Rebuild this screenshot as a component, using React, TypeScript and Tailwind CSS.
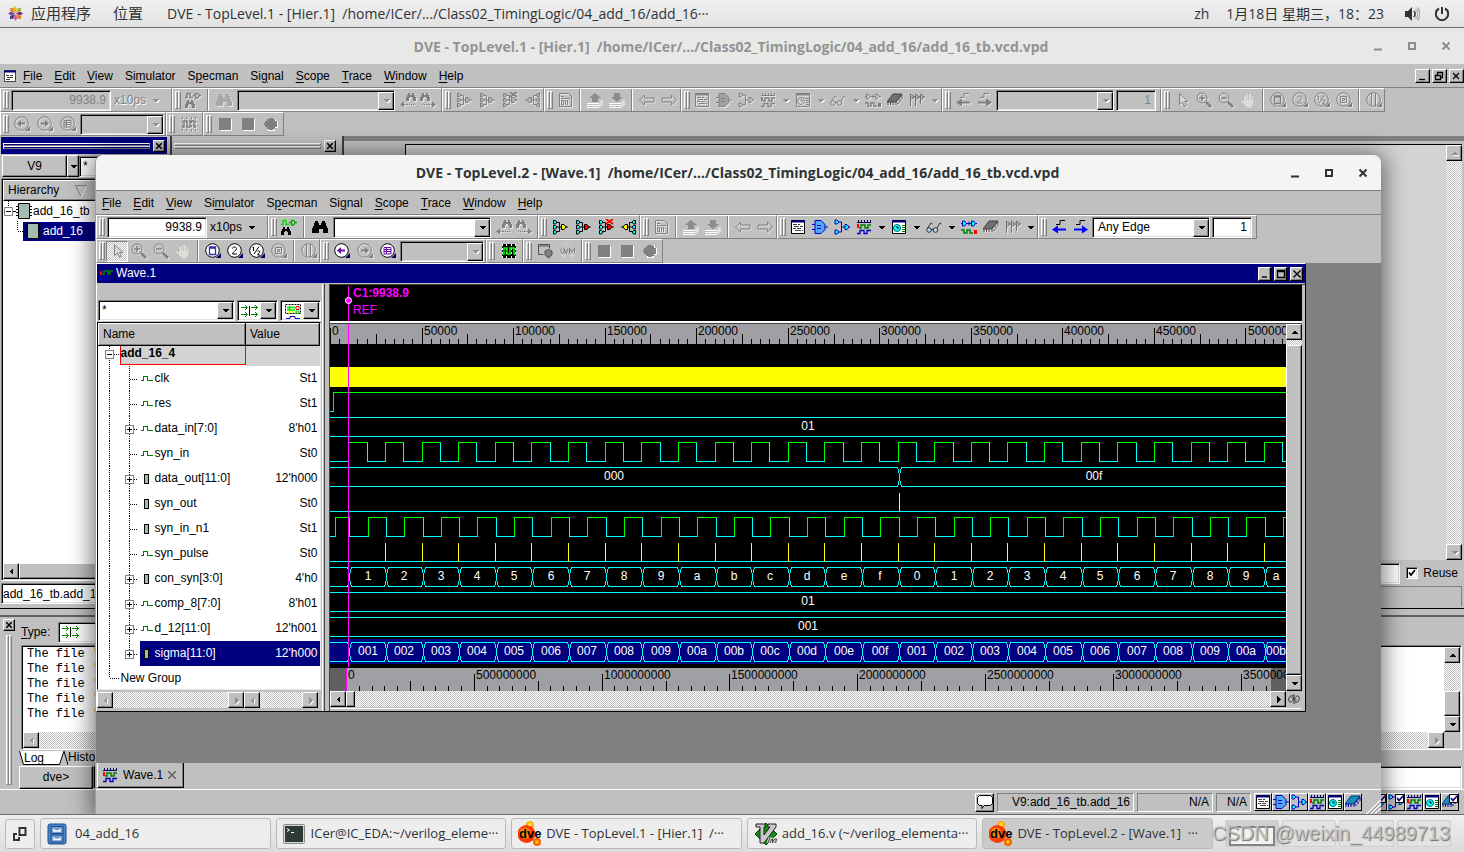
import React from "react";

const raised =
  "border border-t-white border-l-white border-r-black border-b-black bg-[#c0c0c0] shadow-[inset_-1px_-1px_0_#808080]";
const well =
  "border border-t-[#808080] border-l-[#808080] border-r-white border-b-white p-[1px] shadow-[inset_1px_1px_0_#000000,inset_-1px_-1px_0_#dfdfdf]";
const statusBox =
  "flex h-[19px] items-center justify-end border border-t-[#808080] border-l-[#808080] border-r-white border-b-white pr-[3px]";
const dither = "bg-[repeating-conic-gradient(#c0c0c0_0_25%,#ffffff_0_50%)] bg-[length:2px_2px]";
const uiFont = "font-['Liberation_Sans',Arial,sans-serif]";
const titleFont = "font-['Open_Sans','Noto_Sans','Noto_Sans_CJK_SC',sans-serif]";

/* ---------- icons ---------- */

type IconName =
  | "signalFind" | "binoculars" | "findPrev" | "findNext" | "fanIn" | "fanInRed" | "fanInX" | "fanOut"
  | "doc" | "up" | "down" | "back" | "forward" | "source" | "gate" | "schematic" | "wave" | "list"
  | "glasses" | "gateWave" | "chip" | "flags" | "edgePrev" | "edgeNext" | "cursor" | "zoomIn" | "zoomOut"
  | "hand" | "fit" | "two" | "half" | "zoomBox" | "cursors" | "circleBack" | "circleFwd" | "circleList"
  | "waveGreen" | "dbShield" | "uvm" | "square" | "dot" | "bus" | "group";

const lens = (ink: string, fill: string, dark: string, body: React.ReactNode) => (
  <g>
    <circle cx="7.5" cy="7.5" r="6.8" fill={fill} stroke={ink} />
    <path d="M11 15h5v-5z" fill={dark} />
    {body}
  </g>
);

function Icon({ name, off = false, checked = false }: { name: IconName; off?: boolean; checked?: boolean }) {
  const c = (color: string) => (off ? "#808080" : color);
  const k = c("#000000");
  const blue = c("#0000c0");
  const lensFill = off ? "none" : "#ffffff";
  const purple = c("#6a0dad");
  let w = 16;
  let body: React.ReactNode = null;
  const bino = (x: number, y: number, color: string) => (
    <path
      transform={`translate(${x} ${y})`}
      fill={color}
      d="M2 0h2v2h2V0h2v2h1v2h1v4H7V5H6V4H4v1H3v3H0V4h1V2h1z"
    />
  );
  const smallTree = (tip: string, flip: boolean) => (
    <g transform={flip ? "translate(16 0) scale(-1 1)" : undefined}>
      <path d="M4 3.500h3.500v9H4M4 8h6M14 8h2" fill="none" stroke={k} />
      <path
        d="M1.500 1.500h2l1.500 1.500-1.500 2h-2zM1.500 6.500h2l1.500 1.500-1.500 2h-2zM1.500 11.500h2l1.500 1.500-1.500 2h-2z"
        fill={off ? "#b0b0b0" : "#00ffff"}
        stroke={k}
      />
      <path d="M9.500 5.500h2.500l2 2.500-2 2.500h-2.500z" fill={off ? "#b0b0b0" : tip} stroke={k} />
    </g>
  );
  switch (name) {
    case "signalFind":
      body = (
        <g>
          <path d="M0 5.500h2V1.500h3v4h3" fill="none" stroke={c("#00e000")} strokeWidth="1.500" />
          <path d="M8 3.500h2M10.500 1.500h2l2 2-2 2.500h-2zM14 3.500h2" fill="none" stroke={c("#00b000")} strokeWidth="1.300" />
          {bino(0, 8, k)}
        </g>
      );
      break;
    case "binoculars":
      body = <path fill={off ? "#a8a8a8" : k} d="M3 2h3v2h1v2h2V4h1V2h3v2h1v3h1v2h1v5h-5v-4H7v4H0V9h1V7h1V4h1z" />;
      break;
    case "findPrev":
      body = <g>{bino(6, 1, "#808080")}<path d="M1 12.500h4M9 12.500h1m1 0h1m1 0h1M6 12.500h2" stroke="#808080" /><path d="M0 12.500l4-3v6z" fill="#808080" /></g>;
      break;
    case "findNext":
      body = <g>{bino(0, 1, "#808080")}<path d="M11 12.500h4M2 12.500h1m1 0h1m1 0h1M8 12.500h2" stroke="#808080" /><path d="M16 12.500l-4-3v6z" fill="#808080" /></g>;
      break;
    case "fanIn":
      body = smallTree("#ffff00", false);
      break;
    case "fanInRed":
      body = smallTree("#ff0000", false);
      break;
    case "fanInX":
      body = <g>{smallTree("#ff0000", false)}<path d="M8 0l7 5M15 0L8 5" stroke={c("#ff0000")} strokeWidth="1.800" /></g>;
      break;
    case "fanOut":
      body = smallTree("#ffff00", true);
      break;
    case "doc":
      body = (
        <g fill="none" stroke="#808080">
          <path d="M2.500 1.500h9l3 3v10h-12zM4 4.500h3M4 6.500h9" />
          <path d="M4.500 8.500h2v4h-2zM8.500 8v5M10.500 8v5" />
        </g>
      );
      break;
    case "up":
    case "down":
      body = (
        <g>
          <path d="M0 11.500h12l4-4M0 13.500h12l4-4M0 15.500h12l4-4" stroke="#ffffff" fill="none" />
          <path fill="#8c8c8c" d={name === "up" ? "M8 1l6 5h-3v4H5V6H2z" : "M8 10l6-5h-3V1H5v4H2z"} />
        </g>
      );
      break;
    case "back":
      body = <path d="M.5 8l5-5v3H15v4H5.500v3z" fill="none" stroke="#808080" />;
      break;
    case "forward":
      body = <path d="M15.500 8l-5-5v3H1v4h9.500v3z" fill="none" stroke="#808080" />;
      break;
    case "source":
      body = (
        <g>
          <path d="M1.500 1.500h13v13h-13z" fill={off ? "none" : "#ffffff"} stroke={k} />
          <path d="M1 2.500h14" stroke={c("#000080")} strokeWidth="2" />
          <path d="M3 5.500h4m1 0h2M4 7.500h5m1 0h3M3 9.500h3m1 0h4M5 11.500h6m1 0h1" stroke={c("#404040")} />
        </g>
      );
      break;
    case "gate":
      body = (
        <g>
          <path d="M0 5.500h3M0 10.500h3M13 8h3" stroke={blue} />
          <path d="M3 1.500h6l4 4v5l-4 4H3z" fill={off ? "#a0a0a0" : "#50a8ff"} stroke={blue} />
          <path d="M5 6.500h4M5 9.500h4" stroke={blue} />
        </g>
      );
      break;
    case "schematic":
      body = (
        <g>
          <path d="M4 3h3.500v10H4M7.500 8H11M15 8h1" stroke={blue} fill="none" />
          <path d="M1 1h2l2 2-2 2H1zM1 11h2l2 2-2 2H1zM11 5.500h2l2 2.500-2 2.500h-2z" fill={off ? "#c0c0c0" : "#00ffff"} stroke={blue} />
        </g>
      );
      break;
    case "wave":
      body = (
        <g fill="none">
          <path d="M1 3.500h14M2.500 1v2M5.500 1v2M8.500 1v2M11.500 1v2M14.500 1v2" stroke={c("#000060")} />
          <path d="M1 5h2v4H1z" fill={c("#ff0000")} />
          <path d="M3 9h2V6h4v3h3V6h3" stroke={c("#008000")} strokeWidth="1.500" />
          <path d="M1 14.500h3v-3h4v3h3v-3h4" stroke={blue} strokeWidth="1.300" />
        </g>
      );
      break;
    case "list":
      body = (
        <g>
          <path d="M1.500 1.500h13v13h-13z" fill={off ? "none" : "#ffffff"} stroke={k} />
          <path d="M1 2.500h14" stroke={c("#000080")} strokeWidth="2" />
          <circle cx="6" cy="9" r="3.500" fill={off ? "#d8d8d8" : "#00ffff"} stroke={c("#007070")} />
          <path d="M6 7v2h2" stroke={k} fill="none" />
          <path d="M11 6.500h3M11 8.500h3M11 10.500h3M11 12.500h3" stroke={c("#008000")} />
        </g>
      );
      break;
    case "glasses":
      body = (
        <g fill="none" stroke={c("#303030")}>
          <circle cx="3" cy="11" r="2.300" fill={off ? "none" : "#b0d8f8"} />
          <circle cx="9.500" cy="11" r="2.300" fill={off ? "none" : "#b0d8f8"} />
          <path d="M5 10.500h2M1.500 9l3.500-5 1.500 1M11 9l3-5 1.500 1" />
        </g>
      );
      break;
    case "gateWave":
      body = (
        <g fill="none">
          <path d="M0 4.500h16M8 2.500v4" stroke={blue} />
          <path d="M1.500 2h2l2 2.500-2 2.500h-2zM10.500 2h2l2 2.500-2 2.500h-2z" fill={off ? "#c0c0c0" : "#00ffff"} stroke={blue} />
          <path d="M0 11h3v3h3v-3h3v3h3" stroke={c("#008000")} strokeWidth="1.500" />
          <path d="M13 11h3v4h-3z" fill={c("#ff0000")} />
        </g>
      );
      break;
    case "chip":
      body = (
        <g>
          <path d="M6 2h9l-6 8H0z" fill={off ? "#707070" : "#1890b8"} stroke={off ? "#404040" : "#003080"} />
          <path d="M1 10v3M3.500 10v3M6 10v3M9 13v-3l6-7v4M11 10v2M13 7v3" stroke={off ? "#505050" : "#0000a0"} fill="none" />
        </g>
      );
      break;
    case "flags":
      body = <path d="M1.500 14V2l4 3-4 3M6.500 14V2l4 3-4 3M11.500 12V2l4 3-4 3M1 5h15" fill="none" stroke="#707070" />;
      break;
    case "edgePrev":
      body = <g><path d="M5 5.500h4v-4h5" fill="none" stroke={k} /><path d="M1 10.500l6-4v3h8v2H7v3z" fill={c("#0000ff")} /></g>;
      break;
    case "edgeNext":
      body = <g><path d="M3 5.500h4v-4h5" fill="none" stroke={k} /><path d="M15 10.500l-6-4v3H1v2h8v3z" fill={c("#0000ff")} /></g>;
      break;
    case "cursor":
      body = <path d="M5.500 1.500v11l3-2.500 2 4.500 2-1-2-4h3.500z" fill="#d8d8d8" stroke="#808080" />;
      break;
    case "zoomIn":
    case "zoomOut":
      body = (
        <g fill="none" stroke="#808080">
          <circle cx="6" cy="6" r="5" />
          <path d="M10 10l5 5" strokeWidth="2.500" />
          <path d={name === "zoomIn" ? "M3 6h6M6 3v6" : "M3 6h6"} strokeWidth="1.500" />
        </g>
      );
      break;
    case "hand":
      body = (
        <g>
          <path d="M5 9V4M7.500 8V2M10 8V2.500M12.500 9V4.500M2 9l3 3" stroke="#aaa8a2" strokeWidth="3" strokeLinecap="round" />
          <path d="M5 9V4M7.500 8V2M10 8V2.500M12.500 9V4.500M2 9l3 3" stroke="#dedcd7" strokeWidth="2" strokeLinecap="round" />
          <path d="M4 8h9.500v3l-2 4.500H7L4 12z" fill="#dedcd7" />
        </g>
      );
      break;
    case "fit":
      body = lens(k, lensFill, c("#00006a"), <path d="M4.500 4h6v7.500h-6zM4.500 5h6" fill="none" stroke={c("#3030b0")} strokeWidth="1.300" />);
      break;
    case "two":
      body = lens(k, lensFill, c("#00006a"), <path d="M5.500 5.500c0-2 4-2 4 0S5.500 9 5.500 11H10" fill="none" stroke={k} />);
      break;
    case "half":
      body = lens(k, lensFill, c("#00006a"), <path d="M3.500 4.500l1-.5v4M5 11l5-7.500M8.500 8.500c1-1.500 3-.5 2 1L8.500 12H11" fill="none" stroke={k} />);
      break;
    case "zoomBox":
      body = lens("#808080", "none", "#808080", <path d="M4.500 4.500h6v6h-6zM6.500 6.500h2v2h-2z" fill="none" stroke="#808080" />);
      break;
    case "cursors":
      body = lens("#808080", "none", "#808080", <path d="M5.500 1v13M9.500 1v13" stroke="#808080" />);
      break;
    case "circleBack":
      body = lens(k, lensFill, c("#00006a"), <path d="M3 7.500l4-3.500v2.500h4v2H7V11z" fill={purple} />);
      break;
    case "circleFwd":
      body = lens("#808080", "none", "#808080", <path d="M12 7.500L8 4v2.500H4v2h4V11z" fill="#808080" />);
      break;
    case "circleList":
      body = lens(k, lensFill, c("#00006a"), <path d="M4 4.500h7v6.500H4zM4 6.500h7M4 8.500h7M6.500 4v7" fill="none" stroke={purple} />);
      break;
    case "waveGreen":
      body = (
        <g fill="none">
          {!off && <path d="M1 1h14v14H1z" fill="#000000" />}
          <path d="M1.500 1v14M5.500 1v14M10.500 1v14M14.500 1v14" stroke={off ? "#808080" : "#ffffff"} strokeDasharray="2 2" />
          <path d="M1 11h2V5h3v6h3V5h4v6h2" stroke={c("#00ff00")} strokeWidth="1.500" />
        </g>
      );
      break;
    case "dbShield":
      body = <g fill="none" stroke="#505050"><path d="M1.500 1.500h11v4M1.500 1.500v10h5M1 3h12" /><path d="M8 8l3.500-1.500L15 8v4l-3.500 3L8 12z" fill="#808080" /></g>;
      break;
    case "uvm":
      body = (
        <g>
          <circle cx="8" cy="8" r="6.500" fill="none" stroke="#ffffff" strokeWidth="2" strokeDasharray="8 5" />
          <circle cx="8" cy="8" r="6.500" fill="none" stroke="#909090" strokeDasharray="8 5" />
          <path d="M1 5.500v4l1.500 1 1.500-1v-4l2 5 2-5M9.500 10.500v-5L12 9l2.500-3.500v5" fill="none" stroke="#808080" />
        </g>
      );
      break;
    case "square":
      body = <g><path d="M3 3h12v12H3z" fill="#ffffff" /><path d="M2 2h12v12H2z" fill="#808080" /></g>;
      break;
    case "dot":
      body = <g><path d="M5 3h8v2h2v7h-3v3H5z" fill="#ffffff" /><path d="M6 2h4v1h2v2h2v6h-2v2h-2v1H6v-1H4v-2H2V9H1V7h1V5h2V3h2z" fill="#808080" /></g>;
      break;
    case "bus":
      w = 18;
      body = (
        <g stroke="#008000" fill="none">
          <path d="M0 4.500h6M4 2l2.500 2.500L4 7M0 11.500h6M4 9l2.500 2.500L4 14M10 4.500h7M14 2l2.500 2.500L14 7M10 11.500h7M14 9l2.500 2.500L14 14" />
          <path d="M8.500 3v10" stroke="#000000" />
        </g>
      );
      break;
    case "group":
      w = 18;
      body = (
        <g fill="none">
          <path d="M1.500 1.500h15v9h-15z" stroke="#000000" strokeDasharray="2 1" />
          <path d="M3 4.500h8M5.500 3v4M3 7h8" stroke="#00e000" strokeWidth="1.500" />
          <path d="M12 3.500h3v3h-3z" stroke="#ff0000" />
          <path d="M3 9h7" stroke="#ffff00" strokeWidth="1.500" />
          <path d="M12 8h3v2h-3z" stroke="#00e000" />
          <path d="M2 15.500h4v-2h5v2h5" stroke="#0000c0" />
        </g>
      );
      break;
  }
  const emboss = off && !["hand", "square", "dot"].includes(name);
  return (
    <svg
      width={w}
      height="16"
      viewBox={`0 0 ${w} 16`}
      aria-hidden="true"
      className={emboss ? "shrink-0 [filter:drop-shadow(1px_1px_0_#e4e4e4)]" : "shrink-0"}
    >
      {body}
      {checked && (
        <g fill="none">
          <path d="M7.500.5h8v8h-8z" fill="#ffffff" stroke="#000000" />
          <path d="M9 4l2 2.500L15 2" stroke="#000080" strokeWidth="1.500" />
        </g>
      )}
    </svg>
  );
}

function Caret({ off = false, dir = "down" }: { off?: boolean; dir?: "down" | "up" | "left" | "right" }) {
  const d = { down: "M1 3h7L4.500 6.500z", up: "M1 6h7L4.500 2.500z", left: "M6 1v7L2.500 4.500z", right: "M3 1v7l3.500-3.500z" }[dir];
  return (
    <svg width="9" height="9" viewBox="0 0 9 9" shapeRendering="crispEdges" aria-hidden="true" className="shrink-0">
      {off && <path d={d} fill="#ffffff" transform="translate(1 1)" />}
      <path d={d} fill={off ? "#909090" : "#000000"} />
    </svg>
  );
}

/* ---------- toolbar parts ---------- */

function Tool({ name, off = false, label, w = "w-[22px]", pressed = false }: {
  name: IconName; off?: boolean; label: string; w?: string; pressed?: boolean;
}) {
  return (
    <button
      type="button"
      aria-label={label}
      className={`flex h-[21px] shrink-0 items-center justify-center ${w} ${pressed ? `${dither} border border-t-[#808080] border-l-[#808080] border-r-white border-b-white` : ""}`}
    >
      <Icon name={name} off={off} />
    </button>
  );
}

function Drop({ off = false, label }: { off?: boolean; label: string }) {
  return (
    <button type="button" aria-label={label} className="flex h-[21px] w-[13px] shrink-0 items-center justify-center">
      <Caret off={off} />
    </button>
  );
}

const Sep = () => <span className="mx-[3px] h-6 w-[2px] shrink-0 border-l border-l-[#808080] border-r border-r-white" />;

function Grip({ className = "" }: { className?: string }) {
  return <span className={`w-[3px] border border-t-white border-l-white border-r-[#808080] border-b-[#808080] ${className}`} />;
}

function Group({ w, children }: { w: string; children: React.ReactNode }) {
  return (
    <div className={`flex h-6 shrink-0 items-center overflow-hidden border border-t-white border-l-white border-r-[#808080] border-b-[#808080] ${w}`}>
      <span className="flex w-[9px] shrink-0 pl-[2px]">
        <Grip className="h-[18px]" />
        <Grip className="h-[18px]" />
      </span>
      {children}
    </div>
  );
}

function Select({ w, off = false, value = "", label }: { w: string; off?: boolean; value?: string; label: string }) {
  return (
    <span className={`relative flex h-[21px] shrink-0 items-center ${well} ${w} ${off ? "bg-[#c0c0c0]" : "bg-white"}`}>
      <select aria-label={label} className="h-full w-full appearance-none bg-transparent pl-1 text-[12px] text-black outline-none">
        <option>{value}</option>
      </select>
      <span className={`pointer-events-none absolute top-[1px] right-0 bottom-0 flex w-4 items-center justify-center ${raised}`}>
        <Caret off={off} />
      </span>
    </span>
  );
}

const inputBase = `shrink-0 text-right text-[12px] outline-none h-[21px] ${well}`;

function GroupA({ off = false }: { off?: boolean }) {
  return (
    <Group w="w-[172px]">
      <input aria-label="Time" defaultValue="9938.9" className={`${inputBase} ml-[1px] w-[100px] pr-1 ${off ? "bg-[#c0c0c0] text-[#808080]" : "bg-white text-black"}`} />
      <span className={`w-[38px] shrink-0 pl-[3px] ${off ? "text-[#808080] [text-shadow:1px_1px_0_white]" : ""}`}>x10ps</span>
      <Drop off={off} label="Time unit" />
    </Group>
  );
}

function GroupB({ off = false }: { off?: boolean }) {
  return (
    <Group w="w-[270px]">
      <Tool name="signalFind" off={off} label="Search signals" />
      <Sep />
      <Tool name="binoculars" off={off} label="Find" w="w-6" />
      <span className="w-[1px] shrink-0" />
      <Select w="w-[158px]" off={off} label="Find text" />
      <span className="w-1 shrink-0" />
      <Tool name="findPrev" off label="Find previous" w="w-[18px]" />
      <Tool name="findNext" off label="Find next" w="w-[22px]" />
    </Group>
  );
}

function GroupC({ off = false }: { off?: boolean }) {
  return (
    <Group w="w-[102px]">
      <Tool name="fanIn" off={off} label="Drivers" w="w-[23px]" />
      <Tool name="fanInRed" off={off} label="Active drivers" w="w-[23px]" />
      <Tool name="fanInX" off={off} label="Trace X" w="w-[23px]" />
      <Tool name="fanOut" off={off} label="Loads" w="w-[23px]" />
    </Group>
  );
}

function GroupD() {
  return (
    <Group w="w-[137px]">
      <Tool name="doc" off label="Edit source" />
      <Sep />
      <Tool name="up" label="Scope up" />
      <Tool name="down" label="Scope down" />
      <Sep />
      <Tool name="back" off label="Back" />
      <Tool name="forward" off label="Forward" />
    </Group>
  );
}

function GroupE({ off = false }: { off?: boolean }) {
  return (
    <Group w="w-[261px]">
      <Tool name="source" off={off} label="Source view" />
      <Tool name="gate" off={off} label="Schematic view" />
      <Tool name="schematic" off={off} label="Path schematic" />
      <Tool name="wave" off={off} label="Wave view" />
      <Drop off={off} label="Wave view options" />
      <Tool name="list" off={off} label="List view" />
      <Drop off={off} label="List view options" />
      <Tool name="glasses" off={off} label="Watch" />
      <Drop off={off} label="Watch options" />
      <Tool name="gateWave" off={off} label="Compare" />
      <Tool name="chip" off label="Memory" />
      <Tool name="flags" off label="Markers" />
      <Drop off={off} label="Marker options" />
    </Group>
  );
}

function GroupF({ off = false }: { off?: boolean }) {
  return (
    <Group w="w-[219px]">
      <Tool name="edgePrev" off={off} label="Previous edge" />
      <Tool name="edgeNext" off={off} label="Next edge" />
      <Select w="w-[118px]" off={off} value={off ? "" : "Any Edge"} label="Edge type" />
      <input aria-label="Edge count" defaultValue="1" className={`${inputBase} ml-[2px] w-[40px] pr-1 ${off ? "bg-[#c0c0c0] text-[#808080]" : "bg-white text-black"}`} />
    </Group>
  );
}

function GroupG({ off = false }: { off?: boolean }) {
  return (
    <Group w="w-[224px]">
      <Tool name="cursor" off label="Select" pressed={!off} />
      <Tool name="zoomIn" off label="Zoom in" />
      <Tool name="zoomOut" off label="Zoom out" />
      <Tool name="hand" off label="Pan" />
      <Sep />
      <Tool name="fit" off={off} label="Zoom full" />
      <Tool name="two" off={off} label="Zoom in 2x" />
      <Tool name="half" off={off} label="Zoom out 2x" />
      <Tool name="zoomBox" off label="Zoom area" />
      <Sep />
      <Tool name="cursors" off label="Zoom to cursors" />
    </Group>
  );
}

function GroupH({ off = false }: { off?: boolean }) {
  return (
    <Group w="w-[166px]">
      <Tool name="circleBack" off={off} label="Previous zoom" w="w-[23px]" />
      <Tool name="circleFwd" off label="Next zoom" w="w-[23px]" />
      <Tool name="circleList" off={off} label="Named zooms" w="w-[24px]" />
      <Select w="w-[84px]" off label="Zoom name" />
    </Group>
  );
}

const GroupI = ({ off = false }: { off?: boolean }) => (
  <Group w="w-[37px]">
    <Tool name="waveGreen" off={off} label="Signal groups" w="w-[26px]" />
  </Group>
);

const GroupJ = () => (
  <Group w="w-[59px]">
    <Tool name="dbShield" label="Database" w="w-[23px]" />
    <Tool name="uvm" label="UVM" w="w-[24px]" />
  </Group>
);

const GroupK = () => (
  <Group w="w-[81px]">
    <Tool name="square" label="Stop" w="w-[23px]" />
    <Tool name="square" label="Break" w="w-6" />
    <Tool name="dot" label="Record" w="w-[22px]" />
  </Group>
);

const menus: [string, number][] = [
  ["File", 0], ["Edit", 0], ["View", 0], ["Simulator", 2], ["Specman", 1], ["Signal", 2],
  ["Scope", 0], ["Trace", 0], ["Window", 0], ["Help", 0],
];

function MenuItems() {
  return (
    <>
      {menus.map(([m, i]) => (
        <button key={m} type="button">
          {m.slice(0, i)}
          <span className="underline underline-offset-2">{m[i]}</span>
          {m.slice(i + 1)}
        </button>
      ))}
    </>
  );
}

function TitleButtons({ color }: { color: string }) {
  return (
    <div className="flex items-center gap-[18px]">
      {["M4 11.500h8", "M5 5h6v6h-6z", "M4.500 4.500l7 7M11.500 4.500l-7 7"].map((d, i) => (
        <button key={d} type="button" aria-label={["Minimize", "Maximize", "Close"][i]}>
          <svg width="16" height="16" viewBox="0 0 16 16">
            <path d={d} stroke={color} strokeWidth="2" fill="none" />
          </svg>
        </button>
      ))}
    </div>
  );
}

function CloseX({ label }: { label: string }) {
  return (
    <button type="button" aria-label={label} className={`flex h-3 w-3 shrink-0 items-center justify-center ${raised}`}>
      <svg width="6" height="6" viewBox="0 0 6 6"><path d="M0 0l6 6M6 0L0 6" stroke="#000" strokeWidth="1.500" /></svg>
    </button>
  );
}

function ScrollBtn({ dir, off = false }: { dir: "up" | "down" | "left" | "right"; off?: boolean }) {
  return (
    <button type="button" aria-label={`Scroll ${dir}`} className={`flex h-4 w-4 shrink-0 items-center justify-center ${raised}`}>
      <Caret dir={dir} off={off} />
    </button>
  );
}

function DockTitle({ active = false, label }: { active?: boolean; label: string }) {
  const bar = "h-[3px] border border-t-white border-l-white border-r-[#808080] border-b-[#808080]";
  return (
    <div className={`flex h-[17px] shrink-0 items-center gap-[3px] pr-[2px] pl-[2px] ${active ? "bg-[#000080]" : "bg-[#c0c0c0]"}`}>
      <div className="flex flex-1 flex-col">
        <span className={bar} />
        <span className={bar} />
      </div>
      <CloseX label={label} />
    </div>
  );
}

/* ---------- back window ---------- */

const ChipGlyph = () => (
  <svg width="16" height="16" viewBox="0 0 16 16" aria-hidden="true" className="shrink-0">
    <path d="M0 3.500h16M0 6.500h16M0 9.500h16M0 12.500h16" stroke="#000000" />
    <path d="M2.500.5h11v15h-11z" fill="#a4bcb0" stroke="#000000" />
  </svg>
);

function StatusIcons({ checks = false }: { checks?: boolean }) {
  const names: IconName[] = ["source", "gate", "schematic", "wave", "list", "chip"];
  return (
    <div className="flex shrink-0">
      {names.map((n, i) => (
        <button key={n} type="button" aria-label={n} className="flex h-[18px] w-[18px] items-center justify-center border border-t-white border-l-white border-r-black border-b-black">
          <Icon name={n} checked={checks && [1, 2, 5].includes(i)} />
        </button>
      ))}
    </div>
  );
}

function LeftDock() {
  return (
    <div className="flex w-[172px] shrink-0 flex-col border-r-2 border-r-[#404040] pt-[1px] pr-[3px] pl-[1px]">
      <DockTitle active label="Close hierarchy" />
      <div className="flex h-[24px] shrink-0 items-center">
        <button type="button" className={`ml-[1px] h-[22px] w-[65px] ${raised}`}>V9</button>
        <button type="button" aria-label="Choose database" className={`flex h-[22px] w-3 items-center justify-center ${raised}`}><Caret /></button>
        <input aria-label="Filter" defaultValue="*" className={`h-[21px] w-[84px] bg-white pl-[3px] text-[12px] ${well}`} />
      </div>
      <div className={`flex min-h-0 flex-1 flex-col bg-white ${well}`}>
        <div className={`flex h-[21px] shrink-0 items-center gap-4 pl-[4px] ${raised}`}>
          Hierarchy
          <svg width="12" height="12" viewBox="0 0 12 12"><path d="M.5.5h11L6 11.500z" fill="none" stroke="#808080" /><path d="M11.500 1L6 12" stroke="#fff" /></svg>
        </div>
        <div className="flex h-[20px] shrink-0 items-center">
          <svg width="13" height="20" viewBox="0 0 13 20" className="shrink-0">
            <path d="M5.500 0v6" stroke="#000" strokeDasharray="1 1" />
            <path d="M1.500 6.500h8v8h-8z" fill="#fff" stroke="#808080" />
            <path d="M3 10.500h5M10 10.500h3" stroke="#000" />
          </svg>
          <ChipGlyph />
          <span className="ml-[1px]">add_16_tb</span>
        </div>
        <div className="flex h-[20px] shrink-0 items-center">
          <svg width="20" height="20" viewBox="0 0 20 20" className="shrink-0">
            <path d="M14.500 0v10M15 10.500h5" stroke="#000" strokeDasharray="1 1" />
          </svg>
          <span className="flex h-[19px] items-center bg-[#000080] pr-10 pl-[2px] text-white">
            <ChipGlyph />
            <span className="ml-[2px]">add_16</span>
          </span>
        </div>
        <div className="flex-1" />
        <div className="flex h-4 shrink-0"><ScrollBtn dir="left" /><div className={`flex-1 ${raised}`} /></div>
      </div>
      <input aria-label="Scope path" defaultValue="add_16_tb.add_16" className={`mt-[2px] mb-[2px] h-[21px] w-full shrink-0 bg-white text-[12px] ${well}`} />
    </div>
  );
}

function BackWindow() {
  const logLines = ["The file '", "The file '", "The file '", "The file '", "The file '"];
  return (
    <section className="flex h-full flex-col bg-[#c0c0c0]">
      <header className="flex h-9 shrink-0 items-center bg-[#e8e8e7] pr-[10px]">
        <h1 className={`flex-1 pl-[92px] text-center text-[14px] font-bold whitespace-pre text-[#919494] ${titleFont}`}>
          {"DVE - TopLevel.1 - [Hier.1]  /home/ICer/.../Class02_TimingLogic/04_add_16/add_16_tb.vcd.vpd"}
        </h1>
        <TitleButtons color="#8b8e8f" />
      </header>
      <nav className="flex h-6 shrink-0 items-center gap-3 border-b border-b-[#808080] pt-[1px] pl-1">
        <svg width="12" height="12" viewBox="0 0 12 12" className="-mr-[5px]">
          <path d="M.5.5h11v11H.5z" fill="#fff" stroke="#404040" /><path d="M0 1.500h12" stroke="#000080" strokeWidth="2" />
          <path d="M2 5.500h3m1 0h3M3 7.500h6M2 9.500h4" stroke="#404040" />
        </svg>
        <MenuItems />
        <div className="flex-1" />
        <div className="flex gap-[2px]">
          {["M3 9.500h6", "M4.500 5V2.500h5v5H7M2.500 5.500h5v4h-5z", "M3 3l6 6M9 3l-6 6"].map((d, i) => (
            <button key={d} type="button" aria-label={["Minimize view", "Restore view", "Close view"][i]} className={`h-[14px] w-[15px] ${raised}`}>
              <svg width="12" height="12" viewBox="0 0 12 12"><path d={d} fill="none" stroke="#000" strokeWidth="1.300" /></svg>
            </button>
          ))}
        </div>
      </nav>
      <div className="flex shrink-0 overflow-hidden">
        <GroupA off /><GroupB off /><GroupC off /><GroupD /><GroupE off /><GroupF off /><GroupG off />
      </div>
      <div className="flex shrink-0 overflow-hidden">
        <GroupH off /><GroupI off /><GroupK />
      </div>
      <div className="flex min-h-0 flex-1">
        <LeftDock />
        <div className="w-[172px] shrink-0 border-r-2 border-r-[#404040] pt-[1px] pr-1"><DockTitle label="Close dock" /></div>
        <div className="flex min-w-0 flex-1 flex-col border-t-[5px] border-t-[#808080] pt-[3px] pr-[2px]">
          <div className="ml-[61px] flex min-h-0 flex-1 border-t border-l border-black bg-[#d3d3d3]">
            <div className="flex-1" />
            <div className={`flex w-4 flex-col justify-between ${dither}`}><ScrollBtn dir="up" off /><ScrollBtn dir="down" off /></div>
          </div>
          <div className="flex h-[26px] shrink-0 items-center justify-end">
            <input aria-label="Source file" className={`h-[21px] flex-1 bg-white ${well}`} />
            <label className="flex items-center gap-[5px] pr-1 pl-[6px]">
              <span className="relative flex h-3 w-3 items-center justify-center">
                <input type="checkbox" defaultChecked className={`h-3 w-3 appearance-none bg-white ${well}`} />
                <svg width="8" height="8" viewBox="0 0 8 8" className="pointer-events-none absolute"><path d="M1 3.500l2 2.500 4-5" fill="none" stroke="#000" strokeWidth="1.800" /></svg>
              </span>
              Reuse
            </label>
          </div>
          <div className="h-5 shrink-0 border-t border-r border-t-[#808080] border-r-[#808080]" />
        </div>
      </div>
      <div className="mt-[2px] flex h-[181px] shrink-0 flex-col border-t border-t-black pt-[6px]">
        <div className="flex min-h-0 flex-1 border-t-2 border-t-[#606060] pt-[2px]">
          <div className="flex w-[19px] shrink-0 flex-col gap-1 pl-[3px]">
            <CloseX label="Close log" />
            <div className="flex flex-1 pb-1 pl-[3px]">
              <Grip />
              <Grip />
            </div>
          </div>
          <div className="flex min-w-0 flex-1 flex-col pr-[2px]">
            <div className="flex h-[26px] shrink-0 items-center pl-[2px]">
              <span className="w-[37px]"><span className="underline underline-offset-2">T</span>ype:</span>
              <span className={`flex h-[21px] w-14 items-center bg-white pl-[3px] ${well}`}><Icon name="bus" /></span>
            </div>
            <div className={`ml-[2px] flex min-h-0 flex-1 flex-col bg-white ${well}`}>
              <div className="flex min-h-0 flex-1">
                <div className="flex-1 pl-[4px] font-['Liberation_Mono','Courier_New',monospace] text-[12px] leading-[15px] whitespace-pre">
                  {logLines.map((l, i) => <p key={i}>{l}</p>)}
                </div>
                <div className={`flex w-4 flex-col ${dither}`}>
                  <ScrollBtn dir="up" /><div className="flex-1" /><div className={`h-[25px] ${raised}`} /><ScrollBtn dir="down" />
                </div>
              </div>
              <div className={`flex h-4 shrink-0 justify-between ${dither}`}>
                <ScrollBtn dir="left" off />
                <div className="flex"><ScrollBtn dir="right" off /><span className="w-4 bg-[#c0c0c0]" /></div>
              </div>
            </div>
            <div className="flex h-[16px] shrink-0 items-start pt-[1px]">
              <span className="relative flex h-[14px] w-[45px] shrink-0">
                <svg width="45" height="14" viewBox="0 0 45 14" className="absolute inset-0" aria-hidden="true">
                  <path d="M.5 0l4 13.500h36L45 0" fill="#ffffff" stroke="#000000" />
                </svg>
                <button type="button" className="relative pl-[5px] leading-[13px]">Log</button>
              </span>
              <button type="button" className="flex h-[14px] items-start leading-[13px]"><svg width="4" height="14" viewBox="0 0 4 14"><path d="M0 0l4 14" stroke="#000" /></svg>History</button>
            </div>
            <div className="flex h-[23px] shrink-0">
              <button type="button" className={`w-[74px] ${raised}`}>dve&gt;</button>
              <input aria-label="Command" className={`min-w-0 flex-1 bg-white ${well}`} />
            </div>
          </div>
        </div>
      </div>
      <div className="flex h-[25px] shrink-0 items-center justify-end border-t border-t-white pr-[5px]"><StatusIcons checks /></div>
    </section>
  );
}

/* ---------- signal list ---------- */

type Signal = { name: string; value: string; expand?: boolean; kind: "wire" | "reg"; selected?: boolean };
const signals: Signal[] = [
  { name: "clk", value: "St1", kind: "wire" },
  { name: "res", value: "St1", kind: "wire" },
  { name: "data_in[7:0]", value: "8'h01", kind: "wire", expand: true },
  { name: "syn_in", value: "St0", kind: "wire" },
  { name: "data_out[11:0]", value: "12'h000", kind: "reg", expand: true },
  { name: "syn_out", value: "St0", kind: "reg" },
  { name: "syn_in_n1", value: "St1", kind: "reg" },
  { name: "syn_pulse", value: "St0", kind: "wire" },
  { name: "con_syn[3:0]", value: "4'h0", kind: "reg", expand: true },
  { name: "comp_8[7:0]", value: "8'h01", kind: "wire", expand: true },
  { name: "d_12[11:0]", value: "12'h001", kind: "wire", expand: true },
  { name: "sigma[11:0]", value: "12'h000", kind: "reg", expand: true, selected: true },
];

function SignalTable() {
  return (
    <table className="w-full table-fixed border-collapse text-left">
      <thead>
        <tr className="h-[22px]">
          <th className={`w-[147px] pl-1 font-normal ${raised}`}>Name</th>
          <th className={`pl-1 font-normal ${raised}`}>Value</th>
        </tr>
      </thead>
      <tbody>
        <tr className="h-5">
          <td className="p-0">
            <div className="flex h-5">
              <svg width="21" height="20" viewBox="0 0 21 20" shapeRendering="crispEdges" className="shrink-0">
                <path d="M10.500 0v20M15 8.500h6" stroke="#000" strokeDasharray="1 1" />
                <path d="M6.500 4.500h8v8h-8z" fill="#fff" stroke="#808080" />
                <path d="M8 8.500h5" stroke="#000" />
              </svg>
              <span className="h-[19px] flex-1 border border-t-0 border-[#ff0000] bg-[#d3d3d3] leading-[14px] font-bold">add_16_4</span>
            </div>
          </td>
          <td className="bg-[#d3d3d3] p-0" />
        </tr>
        {signals.map((s) => (
          <tr key={s.name} className="h-[25px]">
            <td className="p-0">
              <div className="flex h-[25px]">
                <svg width="41" height="25" viewBox="0 0 41 25" shapeRendering="crispEdges" className="shrink-0">
                  <path d={s.selected ? "M10.500 0v25M30.500 0v13M31 13.500h8" : "M10.500 0v25M30.500 0v25M31 13.500h8"} stroke="#000" strokeDasharray="1 1" />
                  {s.expand && (
                    <g>
                      <path d="M26.500 9.500h8v8h-8z" fill="#fff" stroke="#808080" />
                      <path d="M28 13.500h5M30.500 11v5" stroke="#000" />
                    </g>
                  )}
                </svg>
                <span className={`flex flex-1 items-center ${s.selected ? "bg-[#000080] text-white" : ""}`}>
                  <svg width="15" height="13" viewBox="0 0 15 13" shapeRendering="crispEdges" className="shrink-0">
                    {s.kind === "wire" ? (
                      <path d="M1 8.500h2.500v-4h4v4H13" fill="none" stroke="#008000" />
                    ) : (
                      <path d="M4.500 2.500h4v9h-4z" fill="#a4bcb0" stroke="#000" />
                    )}
                  </svg>
                  {s.name}
                </span>
              </div>
            </td>
            <td className={`p-0 pr-[2px] text-right ${s.selected ? "bg-[#000080] text-white" : ""}`}>{s.value}</td>
          </tr>
        ))}
        <tr className="h-[25px]">
          <td className="p-0" colSpan={2}>
            <div className="flex h-[25px] items-center">
              <svg width="22" height="25" viewBox="0 0 22 25" shapeRendering="crispEdges" className="shrink-0">
                <path d="M10.500 0v12M11 12.500h9" fill="none" stroke="#000" strokeDasharray="1 1" />
              </svg>
              New Group
            </div>
          </td>
        </tr>
      </tbody>
    </table>
  );
}

/* ---------- wave drawing ---------- */

const STEP = 18.31;
const edge = (n: number) => Math.round(STEP * n) + 0.5;
const rowTop = (i: number) => 43.5 + 25 * i;
const WIDTH = 958;

function Clock({ row, offset, startHigh }: { row: number; offset: number; startHigh: boolean }) {
  const hi = rowTop(row);
  const lo = hi + 19;
  let green = "";
  let cyan = "";
  let high = startHigh;
  for (let n = 1; n <= 52; n++) {
    const x = edge(n) + offset;
    const next = Math.min(edge(n + 1) + offset, WIDTH);
    high = !high;
    if (high) green += `M${x} ${lo}V${hi}H${next}`;
    else cyan += `M${x} ${hi}V${lo}H${next}`;
  }
  return (
    <g fill="none">
      <path d={green} stroke="#00ff00" />
      <path d={cyan} stroke="#00ffff" />
      {startHigh ? (
        <g>
          <path d={`M0 ${lo}H5.500`} stroke="#00ffff" />
          <path d={`M5.500 ${lo}V${hi}H${edge(1) + offset}`} stroke="#00ff00" />
        </g>
      ) : (
        <path d={`M0 ${lo}H${edge(1)}`} stroke="#00ffff" />
      )}
    </g>
  );
}

function BusRow({ row, cuts, labels }: { row: number; cuts: number[]; labels: [string, number][] }) {
  const hi = rowTop(row);
  const lo = hi + 19;
  const xs = [-9, ...cuts, WIDTH + 9];
  let d = "";
  for (let i = 0; i < xs.length - 1; i++) {
    const a = xs[i];
    const b = xs[i + 1];
    d += `M${a} ${hi + 7}L${a + 2} ${hi}H${b - 2}L${b} ${hi + 7}M${a} ${lo - 7}L${a + 2} ${lo}H${b - 2}L${b} ${lo - 7}`;
    if (i > 0) d += `M${a} ${hi + 6}V${lo - 6}`;
  }
  return (
    <g>
      <path d={d} fill="none" stroke="#00ffff" />
      {labels.map(([t, x], i) => (
        <text key={i} x={x} y={hi + 12.5} textAnchor="middle" fill="#ffffff">{t}</text>
      ))}
    </g>
  );
}

const hex = "0123456789abcdef";
const cutNs = Array.from({ length: 26 }, (_, i) => 1 + 2 * i);
const cellCenter = (i: number) => (i === 25 ? 946 : Math.round(STEP * (2 + 2 * i)) + 1);

function Waves() {
  const cuts = cutNs.map((n) => edge(n) + 1);
  const pulses = cutNs.slice(1).map((n) => `M${edge(n)} ${rowTop(7)}v19`).join("");
  const ticks = Array.from({ length: 105 }, (_, i) => i)
    .map((i) => {
      const len = i % 10 === 0 ? 16 : i % 5 === 0 ? 10 : 5;
      return `M${Math.round(i * 9.155) + 0.5} 20v${-len}`;
    })
    .join("");
  const lower = Array.from({ length: 73 }, (_, i) => i)
    .map((i) => {
      const len = i % 10 === 0 ? 17 : i % 5 === 0 ? 10 : 5;
      return `M${Math.round(16 + i * 12.78) + 0.5} 367v${-len}`;
    })
    .join("");
  return (
    <svg width="100%" height="367" shapeRendering="crispEdges" className="block min-w-0 flex-1 bg-black text-[12px]" role="img" aria-label="Waveforms">
      <rect width="100%" height="20" fill="#a0a0a4" />
      <path d={ticks} stroke="#000000" />
      {Array.from({ length: 11 }, (_, i) => (
        <text key={i} x={Math.round(i * 91.55) + 2} y="11" fill="#000000">{i * 50000}</text>
      ))}
      <rect y="43" width="100%" height="20" fill="#ffff00" />
      <path d={`M0 ${rowTop(1) + 19}H3.500`} stroke="#00ffff" />
      <path d={`M3.500 ${rowTop(1) + 19}V${rowTop(1)}H${WIDTH}`} fill="none" stroke="#00ff00" />
      <BusRow row={2} cuts={[]} labels={[["01", 478]]} />
      <Clock row={3} offset={0} startHigh={false} />
      <BusRow row={4} cuts={[569.5]} labels={[["000", 284], ["00f", 764]]} />
      <path d={`M0 ${rowTop(5) + 19}H${WIDTH}M0 ${rowTop(7) + 19}H${WIDTH}`} stroke="#00ffff" />
      <path d={`M569.500 ${rowTop(5)}v19`} stroke="#ffff00" />
      <Clock row={6} offset={1} startHigh />
      <path d={pulses} stroke="#ffff00" />
      <BusRow row={8} cuts={cuts} labels={cutNs.map((_, i) => [hex[(i + 1) % 16], cellCenter(i)])} />
      <BusRow row={9} cuts={[]} labels={[["01", 478]]} />
      <BusRow row={10} cuts={[]} labels={[["001", 478]]} />
      <rect y="315" width="100%" height="25" fill="#000080" />
      <BusRow row={11} cuts={cuts} labels={cutNs.map((_, i) => ["00" + (i < 15 ? hex[i + 1] : hex[i - 14]), cellCenter(i)])} />
      <rect y="344" width="100%" height="23" fill="#606060" />
      <rect x="16" y="344" width="925" height="23" fill="#a0a0a4" />
      <path d={lower} stroke="#000000" />
      {Array.from({ length: 8 }, (_, i) => (
        <text key={i} x={Math.round(16 + i * 127.8) + 2} y="355" fill="#000000">{i * 500000000}</text>
      ))}
      <rect x="18" y="0" width="1" height="343" fill="#ff00ff" />
      <rect x="16" y="344" width="1" height="23" fill="#ff00ff" />
    </svg>
  );
}

function WaveWindow() {
  return (
    <section className="mr-[75px] flex h-[449px] flex-col border border-t-white border-l-white border-r-black border-b-black bg-[#c0c0c0]">
      <header className="flex h-[19px] shrink-0 items-center bg-[#000080] pr-[2px] pl-[2px] text-white">
        <svg width="16" height="12" viewBox="0 0 16 12"><path d="M1 3h2v4H1z" fill="#f00" /><path d="M3 6h2V3h4v3h2V3h3" fill="none" stroke="#008000" strokeWidth="1.500" /><path d="M1 11h3V8h4v3h3" fill="none" stroke="#0000d0" /></svg>
        <h3 className="flex-1 pl-[1px]">Wave.1</h3>
        <div className="flex gap-[3px]">
          {["M2 8h5", "M1.500 1.500h7v7h-7zM1 2.500h8", "M1.500 1.500l7 7M8.500 1.500l-7 7"].map((d, i) => (
            <button key={d} type="button" aria-label={["Minimize wave", "Maximize wave", "Close wave"][i]} className={`flex h-[14px] w-[13px] items-center justify-center ${raised}`}>
              <svg width="10" height="10" viewBox="0 0 10 10"><path d={d} fill="none" stroke="#000" strokeWidth="1.400" /></svg>
            </button>
          ))}
        </div>
      </header>
      <div className="flex min-h-0 flex-1 pt-[1px]">
        <div className="flex w-[225px] shrink-0 flex-col">
          <div className="h-[16px] shrink-0" />
          <div className="flex h-[22px] shrink-0 gap-[2px] pl-[1px]">
            <span className={`flex h-[21px] w-[137px] bg-white ${well}`}>
              <input aria-label="Signal filter" defaultValue="*" className="w-full min-w-0 bg-transparent pl-[2px] text-[12px] outline-none" />
              <button type="button" aria-label="Filter history" className={`flex w-4 shrink-0 items-center justify-center ${raised}`}><Caret /></button>
            </span>
            {(["bus", "group"] as IconName[]).map((n) => (
              <button key={n} type="button" aria-label={`${n} filter`} className={`flex h-[21px] w-[41px] items-center justify-between bg-white pl-[3px] ${well}`}>
                <Icon name={n} />
                <span className={`flex h-full w-4 items-center justify-center ${raised}`}><Caret /></span>
              </button>
            ))}
          </div>
          <div className="h-[368px] w-[224px] shrink-0 border border-t-black border-l-black border-r-[#e8e8e8] border-b-[#e8e8e8] bg-white">
            <SignalTable />
          </div>
          <div className={`mt-[2px] flex h-4 w-[221px] ${dither}`}>
            <ScrollBtn dir="left" off /><span className="flex-1" /><ScrollBtn dir="right" off />
            <ScrollBtn dir="left" off /><span className="w-[42px]" /><ScrollBtn dir="right" off />
          </div>
        </div>
        <div className="mr-1 w-[3px] shrink-0 border-l border-l-white border-r border-r-[#404040]" />
        <div className="flex min-w-0 flex-1 flex-col border-t border-l border-[#404040] pr-[3px]">
          <svg width="100%" height="36" className="block shrink-0 bg-black text-[12px]" role="img" aria-label="Cursor C1">
            <rect x="18" y="1" width="1" height="35" fill="#ff00ff" />
            <circle cx="18.500" cy="15.500" r="3" fill="#ff00ff" stroke="#ffffff" />
            <text x="23" y="12" fill="#ff00ff" className="font-bold">C1:9938.9</text>
            <text x="23" y="29" fill="#ff00ff">REF</text>
          </svg>
          <div className="h-[2px] shrink-0 bg-white" />
          <div className="flex shrink-0 border-t border-[#404040]">
            <Waves />
            <div className={`flex w-4 shrink-0 flex-col ${dither}`}>
              <ScrollBtn dir="up" /><div className="h-[5px]" /><div className={`flex-1 ${raised}`} /><ScrollBtn dir="down" />
            </div>
          </div>
          <div className="flex h-4 shrink-0">
            <div className={`flex flex-1 ${dither}`}>
              <ScrollBtn dir="left" /><div className={`h-4 w-[9px] ${raised}`} /><div className="flex-1" /><ScrollBtn dir="right" />
            </div>
            <span className="flex w-4 items-center justify-center">
              <svg width="12" height="12" viewBox="0 0 12 12"><path d="M6 1v10M5 3c-3-1-5 2-4 5 1 2 3 1 4-1s0-3-1.500-2M7 9c3 1 5-2 4-5-1-2-3-1-4 1s0 3 1.500 2" fill="none" stroke="#303030" /></svg>
            </span>
          </div>
          <div className="mt-[1px] h-[1px] bg-white" />
        </div>
      </div>
    </section>
  );
}

function FrontWindow() {
  return (
    <section className="absolute top-[127px] right-[83px] bottom-0 left-[95px] flex flex-col overflow-hidden rounded-t-[8px] border-l border-l-[#a0a0a0] bg-[#c0c0c0] shadow-[0_2px_22px_4px_rgba(0,0,0,0.5)]">
      <header className="flex h-9 shrink-0 items-center border-b border-b-[#808080] bg-[#f4f4f3] pr-[10px]">
        <h2 className={`flex-1 pl-[92px] text-center text-[14px] font-bold whitespace-pre text-[#2e3436] ${titleFont}`}>
          {"DVE - TopLevel.2 - [Wave.1]  /home/ICer/.../Class02_TimingLogic/04_add_16/add_16_tb.vcd.vpd"}
        </h2>
        <TitleButtons color="#2e3436" />
      </header>
      <nav className="flex h-6 shrink-0 items-center gap-3 border-b border-b-[#808080] pt-[1px] pl-[6px]"><MenuItems /></nav>
      <div className="flex shrink-0 overflow-hidden">
        <GroupA /><GroupB /><GroupC /><GroupD /><GroupE /><GroupF />
      </div>
      <div className="flex shrink-0 overflow-hidden">
        <GroupG /><GroupH /><GroupI /><GroupJ /><GroupK />
      </div>
      <div className="min-h-0 flex-1 overflow-hidden bg-[#808080]"><WaveWindow /></div>
      <div className="flex h-[26px] shrink-0 items-start pl-[1px]">
        <button type="button" className="flex h-[25px] w-[87px] items-center gap-[5px] border border-t-0 border-r-black border-b-black border-l-white pl-1 shadow-[inset_-1px_-1px_0_#808080]">
          <Icon name="wave" />
          Wave.1
          <svg width="8" height="8" viewBox="0 0 8 8"><path d="M0 0l8 8M8 0L0 8" stroke="#606060" strokeWidth="1.500" /></svg>
        </button>
      </div>
      <footer className="flex h-[25px] shrink-0 items-center justify-end gap-[3px] border-t border-t-white">
        <button type="button" aria-label="Messages" className={`flex h-[19px] w-[19px] items-center justify-center ${raised}`}>
          <svg width="16" height="16" viewBox="0 0 16 16"><path d="M2.500 1.500h11l2 2v6l-2 2H7l-2 3v-3H2.500l-2-2v-6z" fill="#fff" stroke="#000" /></svg>
        </button>
        <span className={`w-[137px] ${statusBox}`}>V9:add_16_tb.add_16</span>
        <span className={`w-[76px] ${statusBox}`}>N/A</span>
        <span className={`w-[35px] ${statusBox}`}>N/A</span>
        <StatusIcons />
        <svg width="16" height="16" viewBox="0 0 16 16" className="mt-auto"><path d="M2 16L16 2M6 16L16 6M10 16l6-6" stroke="#fff" strokeWidth="1.500" /><path d="M3.500 16L16 3.500M7.500 16L16 7.500M11.500 16l4.500-4.500" stroke="#808080" /></svg>
      </footer>
    </section>
  );
}

/* ---------- desktop shell ---------- */

const DveIcon = () => (
  <svg width="24" height="26" viewBox="0 0 24 26" className="shrink-0">
    <circle cx="12" cy="4" r="4" fill="#ffb000" />
    <circle cx="8.500" cy="13" r="9" fill="#ff3800" />
    <circle cx="7" cy="12" r="5.500" fill="#ff8800" />
    <circle cx="19" cy="21" r="4" fill="#ff6000" />
    <circle cx="19" cy="21" r="1.800" fill="#ffd000" />
    <circle cx="12" cy="3.500" r="1.800" fill="#ffe060" />
    <text x="1" y="17" className="font-['Liberation_Sans',Arial,sans-serif] text-[13px] font-bold" fill="#000">dve</text>
  </svg>
);

const FilesIcon = () => (
  <svg width="20" height="22" viewBox="0 0 20 22" className="shrink-0">
    <rect x="1" y="1" width="18" height="20" rx="2" fill="#4a86cf" stroke="#204a87" />
    <rect x="4" y="3.500" width="12" height="7" fill="#729fcf" stroke="#204a87" />
    <rect x="4" y="12" width="12" height="7" fill="#729fcf" stroke="#204a87" />
    <path d="M7 6v2h6V6M7 14.500v2h6v-2" fill="none" stroke="#ffffff" strokeWidth="1.500" />
  </svg>
);

const TerminalIcon = () => (
  <svg width="22" height="20" viewBox="0 0 22 20" className="shrink-0">
    <rect x=".5" y=".5" width="21" height="19" rx="1" fill="#d8d8d4" stroke="#888a85" />
    <rect x="2" y="2" width="18" height="16" fill="#2e3a36" />
    <path d="M4 4.500l2.500 1.500L4 7.500M8 8.500h3" fill="none" stroke="#ffffff" />
  </svg>
);

const VimIcon = () => (
  <svg width="24" height="24" viewBox="0 0 24 24" className="shrink-0">
    <path d="M12 1l11 11-11 11L1 12z" fill="#109010" stroke="#004000" />
    <path d="M2 2h9v3h-1v8l6-8h-2V2h8v3L10 21H6V5H2z" fill="#c8c8c8" stroke="#202020" />
    <path d="M14 21l2-6M16 21l1.500-4h1v4l2-4h2l-1 4" fill="none" stroke="#e0e0e0" strokeWidth="2.500" />
    <path d="M14 21l2-6M16 21l1.500-4h1v4l2-4h2l-1 4" fill="none" stroke="#404040" />
  </svg>
);

const tasks = [
  { icon: <FilesIcon />, text: "04_add_16" },
  { icon: <TerminalIcon />, text: "ICer@IC_EDA:~/verilog_eleme···" },
  { icon: <DveIcon />, text: "DVE - TopLevel.1 - [Hier.1]  /···" },
  { icon: <VimIcon />, text: "add_16.v (~/verilog_elementa···" },
  { icon: <DveIcon />, text: "DVE - TopLevel.2 - [Wave.1]  ···", active: true },
];

export default function App() {
  return (
    <div className={`flex h-screen min-h-[600px] flex-col overflow-hidden bg-[#c0c0c0] text-[12px] leading-[15px] text-black ${uiFont}`}>
      <header className={`flex h-7 shrink-0 items-center border-b border-b-[#6a6a6a] bg-linear-to-b from-[#f0f0f0] to-[#e2e2e2] pr-[14px] pl-2 text-[14px] text-[#2e3436] ${titleFont}`}>
        <svg width="15" height="15" viewBox="0 0 15 15">
          <path d="M7.500 7.500L4.500 3 7 0l2 3z" fill="#e8b030" />
          <path d="M8 7L10 2h3v3z" fill="#98c040" />
          <path d="M8 7.500L12 5.500l3 2-3 2z" fill="#90207a" />
          <path d="M8 8l5 2v3h-3z" fill="#e08030" />
          <path d="M7.500 8L9.500 12l-2 3-2-3z" fill="#d06090" />
          <path d="M7 8L5 13H2v-3z" fill="#404090" />
          <path d="M7 7.500L3 9.500l-3-2 3-2z" fill="#8040a0" />
          <path d="M7 7L2 5V2h3z" fill="#d89040" />
        </svg>
        <button type="button" className="ml-2 text-[15px]">应用程序</button>
        <button type="button" className="ml-[22px] text-[15px]">位置</button>
        <span className="ml-6 whitespace-pre">{"DVE - TopLevel.1 - [Hier.1]  /home/ICer/.../Class02_TimingLogic/04_add_16/add_16···"}</span>
        <span className="flex-1" />
        <span>zh</span>
        <time className="ml-[17px]">1月18日 星期三，18：23</time>
        <svg width="16" height="16" viewBox="0 0 16 16" className="ml-5">
          <path d="M1 5h3l4-4v14l-4-4H1z" fill="#2e3436" />
          <path d="M10 5c1.500 2 1.500 4 0 6" stroke="#2e3436" strokeWidth="1.500" fill="none" />
          <path d="M11.500 3c3 3 3 7 0 10M13.500 1.500c3 4 3 9 0 13" stroke="#a8aaaa" strokeWidth="1.300" fill="none" />
        </svg>
        <svg width="16" height="16" viewBox="0 0 16 16" className="ml-[14px]">
          <path d="M5 2.500a6.200 6.200 0 1 0 6 0M8 1v7" stroke="#2e3436" strokeWidth="2" fill="none" />
        </svg>
      </header>

      <main className="relative min-h-0 flex-1 overflow-hidden">
        <BackWindow />
        <FrontWindow />
      </main>

      <footer className={`relative flex h-[38px] shrink-0 items-center gap-[5px] border-t border-t-[#6a6a6a] bg-linear-to-b from-[#efefef] to-[#dcdcdc] pr-[13px] pl-[5px] text-[13px] text-[#2e3436] ${titleFont}`}>
        <button type="button" aria-label="Show desktop" className="flex h-[30px] w-[30px] shrink-0 items-center justify-center rounded-[3px] border border-[#bababa] bg-[#ededed]">
          <svg width="16" height="16" viewBox="0 0 16 16"><path d="M7.500 2h6v7h-6zM5 8H2v6h5v-3" fill="none" stroke="#2e3436" strokeWidth="2" /></svg>
        </button>
        {tasks.map((t) => (
          <button
            key={t.text}
            type="button"
            className={`flex h-[31px] min-w-0 flex-1 items-center overflow-hidden rounded-[3px] border border-[#bababa] pl-[6px] whitespace-pre ${t.active ? "bg-[#cacaca]" : "bg-[#ededed]"}`}
          >
            <span className="flex w-7 shrink-0 items-center">{t.icon}</span>
            {t.text}
          </button>
        ))}
        <div className="ml-[7px] flex w-[226px] shrink-0 gap-[3px]">
          {[0, 1, 2, 3].map((i) => (
            <button key={i} type="button" aria-label={`Workspace ${i + 1}`} className={`flex h-[27px] flex-1 items-end justify-center rounded-[2px] border border-[#cecece] ${i === 0 ? "bg-[#cfcfcf]" : "bg-[#e2e2e2]"}`}>
              {i === 0 && <span className="h-[20px] w-[46px] border-2 border-[#848484] bg-[#f2f2f0]" />}
            </button>
          ))}
        </div>
        <span className="absolute right-[14px] bottom-[7px] font-['Liberation_Sans',Arial,sans-serif] text-[20px] leading-6 text-[#c8c8c8]/80 [text-shadow:1px_1px_1px_#707070]">
          CSDN @weixin_44989713
        </span>
      </footer>
    </div>
  );
}
